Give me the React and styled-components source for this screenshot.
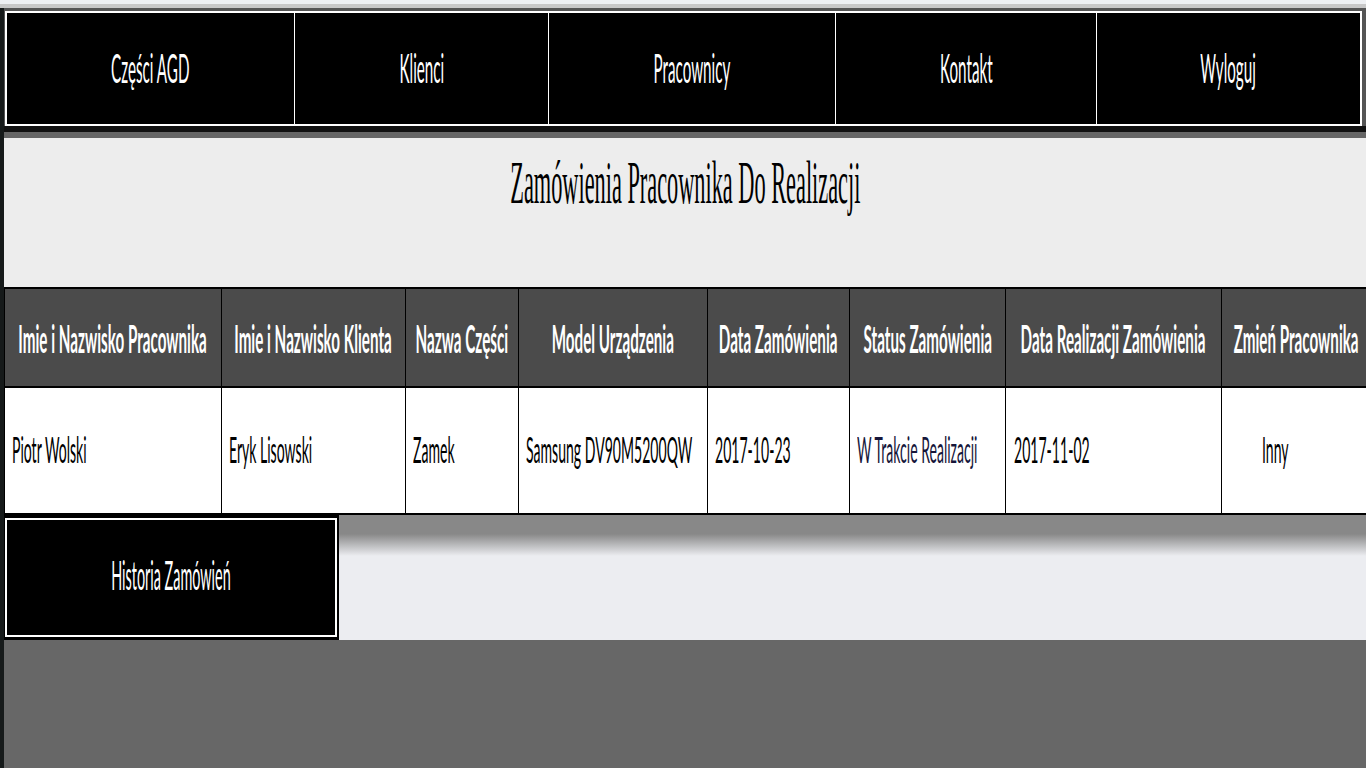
import React from "react";
import styled, { createGlobalStyle } from "styled-components";

const Global = createGlobalStyle`
  html, body { margin: 0; padding: 0; }
  body {
    background: #676767;
    font-family: "Lato", "Liberation Sans", sans-serif;
    overflow: hidden;
    width: 1366px;
    height: 768px;
  }
`;

const TopStrip = styled.div`
  height: 4px;
  background: #eef0f3;
  border-bottom: 4px solid #c8c8c8;
`;

const Page = styled.div`
  border-left: 4px solid #161a1a;
  min-height: 760px;
  background: #676767;
`;

const NavWrap = styled.div`
  background: #555;
  padding: 3px 4px 0 1px;
`;

const Nav = styled.nav`
  display: grid;
  grid-template-columns: 287px 253px 286px 260px 1fr;
  column-gap: 1px;
  background: #fff;
  border: 2px solid #fff;
  height: 111px;
`;

const NavItem = styled.a`
  background: #000;
  display: flex;
  align-items: center;
  justify-content: center;
  color: #fff;
  text-decoration: none;
  overflow: visible;
  padding-bottom: 2px;
`;

const Squish = styled.span`
  display: inline-block;
  flex-shrink: 0;
  white-space: nowrap;
  transform: scaleX(${(p) => p.$s});
  transform-origin: ${(p) => p.$origin || "center"} center;
  font-size: ${(p) => p.$size}px;
  font-weight: ${(p) => p.$weight || 400};
  line-height: 1;
`;

const NavGap = styled.div`
  height: 6px;
  background: #111;
  border-bottom: 6px solid #666;
`;

const TitleArea = styled.section`
  background: #ededed;
  height: 149px;
  display: flex;
  justify-content: center;
  padding-top: 13px;
  box-sizing: border-box;
`;

const Title = styled.h1`
  margin: 0;
  font-family: "Liberation Serif", "Times New Roman", serif;
  font-weight: 400;
  color: #000;
  display: flex;
  justify-content: center;
  height: 60px;
`;

const Table = styled.div`
  display: grid;
  grid-template-columns: 216px 183px 112px 188px 141px 155px 215px 149px;
  column-gap: 1px;
  row-gap: 2px;
  background: #000;
  border-top: 2px solid #000;
  border-bottom: 2px solid #000;
  border-left: 1px solid #000;
  width: 1380px;
`;

const HeadCell = styled.div`
  background: #4b4b4b;
  height: 97px;
  display: flex;
  align-items: center;
  justify-content: center;
  color: #fff;
  overflow: visible;
  padding-top: 1px;
  box-sizing: border-box;
`;

const Cell = styled.div`
  background: #fff;
  height: 125px;
  display: flex;
  align-items: center;
  padding-left: ${(p) => p.$pad || 7}px;
  padding-bottom: 4px;
  box-sizing: border-box;
  color: ${(p) => p.$color || "#000"};
  overflow: visible;
`;

const Bottom = styled.div`
  display: flex;
  height: 125px;
`;

const HistoryOuter = styled.div`
  background: #000;
  width: 335px;
  padding: 3px 2px 3px 1px;
  box-sizing: border-box;
`;

const HistoryButton = styled.a`
  display: flex;
  align-items: center;
  justify-content: center;
  height: 100%;
  box-sizing: border-box;
  border: 2px solid #fff;
  background: #000;
  color: #fff;
  text-decoration: none;
  padding-bottom: 6px;
`;

const Filler = styled.div`
  flex: 1;
  background: linear-gradient(to bottom, #888 0, #888 19px, #ecedf1 41px, #ecedf1 100%);
`;

const NAV = ["Części AGD", "Klienci", "Pracownicy", "Kontakt", "Wyloguj"];
const HEADS = [
  "Imie i Nazwisko Pracownika",
  "Imie i Nazwisko Klienta",
  "Nazwa Części",
  "Model Urządzenia",
  "Data Zamówienia",
  "Status Zamówienia",
  "Data Realizacji Zamówienia",
  "Zmień Pracownika",
];
const ROW = [
  { t: "Piotr Wolski" },
  { t: "Eryk Lisowski" },
  { t: "Zamek" },
  { t: "Samsung DV90M5200QW" },
  { t: "2017-10-23" },
  { t: "W Trakcie Realizacji", color: "#16163a" },
  { t: "2017-11-02", pad: 8 },
  { t: "Inny", pad: 40 },
];

export default function App() {
  return (
    <>
      <Global />
      <TopStrip />
      <Page>
        <NavWrap>
          <Nav>
            {NAV.map((n) => (
              <NavItem key={n} href="#">
                <Squish $s={0.38} $size={40}>{n}</Squish>
              </NavItem>
            ))}
          </Nav>
        </NavWrap>
        <NavGap />
        <TitleArea>
          <Title>
            <Squish $s={0.36} $size={62}>Zamówienia Pracownika Do Realizacji</Squish>
          </Title>
        </TitleArea>
        <Table>
          {HEADS.map((h) => (
            <HeadCell key={h}>
              <Squish $s={0.39} $size={39} $weight={700}>{h}</Squish>
            </HeadCell>
          ))}
          {ROW.map((c, i) => (
            <Cell key={i} $pad={c.pad} $color={c.color}>
              <Squish $s={0.38} $size={37} $origin="left">{c.t}</Squish>
            </Cell>
          ))}
        </Table>
        <Bottom>
          <HistoryOuter>
            <HistoryButton href="#">
              <Squish $s={0.36} $size={40}>Historia Zamówień</Squish>
            </HistoryButton>
          </HistoryOuter>
          <Filler />
        </Bottom>
      </Page>
    </>
  );
}
